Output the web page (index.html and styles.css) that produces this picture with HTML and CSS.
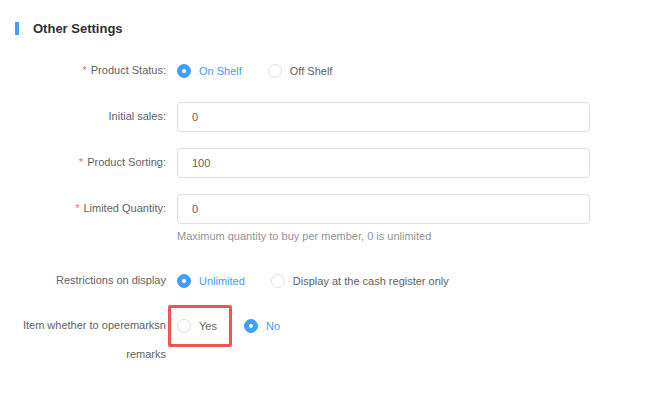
FILE: index.html
```html
<!DOCTYPE html>
<html lang="en">
<head>
    <meta charset="UTF-8">
    <meta name="viewport" content="width=device-width, initial-scale=1.0">
    <title>Other Settings</title>
    <link rel="stylesheet" href="styles.css">
</head>
<body>
    <div class="section">
        <h3 class="section-title">Other Settings</h3>

        <form class="settings-form">
            <div class="form-item">
                <label class="form-label required">Product Status:</label>
                <div class="form-content">
                    <label class="radio checked"><span class="radio-dot"></span>On Shelf</label>
                    <label class="radio"><span class="radio-dot"></span>Off Shelf</label>
                </div>
            </div>

            <div class="form-item">
                <label class="form-label">Initial sales:</label>
                <div class="form-content">
                    <input class="text-input" type="text" value="0">
                </div>
            </div>

            <div class="form-item">
                <label class="form-label required">Product Sorting:</label>
                <div class="form-content">
                    <input class="text-input" type="text" value="100">
                </div>
            </div>

            <div class="form-item has-tip">
                <label class="form-label required">Limited Quantity:</label>
                <div class="form-content">
                    <input class="text-input" type="text" value="0">
                    <div class="tip">Maximum quantity to buy per member, 0 is unlimited</div>
                </div>
            </div>

            <div class="form-item tight">
                <label class="form-label">Restrictions on display</label>
                <div class="form-content">
                    <label class="radio checked"><span class="radio-dot"></span>Unlimited</label>
                    <label class="radio"><span class="radio-dot"></span>Display at the cash register only</label>
                </div>
            </div>

            <div class="form-item">
                <label class="form-label">Item whether to operemarksn remarks</label>
                <div class="form-content">
                    <label class="radio highlight"><span class="radio-dot"></span>Yes</label>
                    <label class="radio checked"><span class="radio-dot"></span>No</label>
                </div>
            </div>
        </form>
    </div>
</body>
</html>
```

FILE: styles.css
```css
body {
    margin: 0;
    font-family: "Liberation Sans", Arial, sans-serif;
    font-size: 11px;
    color: #606266;
    background-color: #fff;
}
.section {
    padding: 22px 0 0 15px;
}
.section-title {
    margin: 0;
    height: 13px;
    line-height: 13px;
    padding-left: 14px;
    border-left: 4px solid #409eff;
    font-size: 13px;
    font-weight: bold;
    color: #303133;
}
.settings-form {
    margin-top: 21px;
    margin-left: -15px;
}
.form-item {
    display: flex;
    margin-bottom: 16px;
}
.form-item.has-tip {
    margin-bottom: 22px;
}
.form-item.tight {
    margin-bottom: 15px;
}
.form-label {
    width: 166px;
    padding-right: 11px;
    text-align: right;
    line-height: 29px;
    color: #606266;
}
.form-label.required::before {
    content: "*";
    color: #f56c6c;
    margin-right: 4px;
}
.form-content {
    width: 413px;
    display: flex;
    flex-wrap: wrap;
    align-items: flex-start;
}
.text-input {
    width: 100%;
    height: 30px;
    padding: 0 14px;
    border: 1px solid #dcdfe6;
    border-radius: 4px;
    box-sizing: border-box;
    font-family: inherit;
    font-size: 11px;
    color: #606266;
    outline: none;
}
.tip {
    width: 100%;
    margin-top: 4px;
    line-height: 16px;
    color: #909399;
}
.radio {
    display: flex;
    align-items: center;
    height: 30px;
    margin-right: 26px;
    color: #606266;
}
.radio-dot {
    width: 12px;
    height: 12px;
    border: 1px solid #dcdfe6;
    border-radius: 50%;
    margin-right: 8px;
    box-sizing: content-box;
    position: relative;
}
.radio.checked {
    color: #409eff;
}
.radio.checked .radio-dot {
    background-color: #409eff;
    border-color: #409eff;
}
.radio.checked .radio-dot::after {
    content: "";
    position: absolute;
    left: 4px;
    top: 4px;
    width: 4px;
    height: 4px;
    border-radius: 50%;
    background-color: #fff;
}
.radio.highlight {
    height: 36px;
    margin: -6px 12px -6px -9px;
    padding: 0 12px 0 6px;
    border: 3px solid #f25353;
    border-radius: 2px;
}
```
